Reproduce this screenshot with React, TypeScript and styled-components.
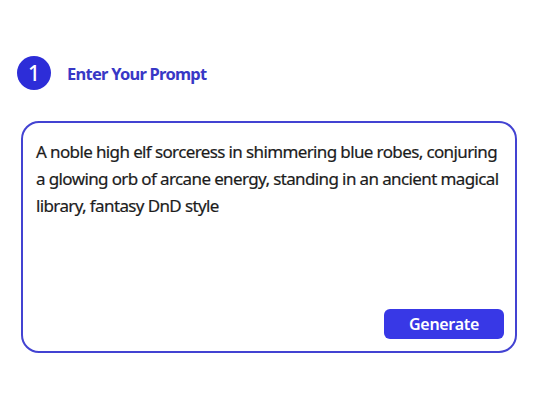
import React from "react";
import styled, { createGlobalStyle } from "styled-components";

const Global = createGlobalStyle`
  html, body { margin: 0; padding: 0; background: #ffffff; }
  body { font-family: "Noto Sans", "Open Sans", sans-serif; }
`;

const Page = styled.div`
  width: 540px;
  height: 405px;
  box-sizing: border-box;
  padding: 56px 23px 0 21px;
  display: flex;
  flex-direction: column;
`;

const Header = styled.div`
  display: flex;
  align-items: center;
  gap: 16px;
  margin-left: -4px;
  height: 34px;
`;

const StepBadge = styled.div`
  width: 34px;
  height: 34px;
  border-radius: 50%;
  background: #2d2dd8;
  color: #ffffff;
  display: flex;
  align-items: center;
  justify-content: center;
  font-size: 21px;
  font-weight: 500;
`;

const Title = styled.div`
  color: #3838c6;
  font-size: 16.5px;
  font-weight: 700;
  letter-spacing: -0.75px;
`;

const PromptBox = styled.div`
  margin-top: 31px;
  height: 232px;
  box-sizing: border-box;
  border: 2px solid #4343d2;
  border-radius: 18px;
  padding: 15px 11px 12px 13px;
  display: flex;
  flex-direction: column;
  justify-content: space-between;
`;

const PromptText = styled.p`
  margin: 0 -4px 0 0;
  color: #1c1c1c;
  font-size: 17px;
  line-height: 27px;
  letter-spacing: -0.62px;
  font-weight: 400;
  -webkit-text-stroke: 0.2px #1c1c1c;
`;

const Actions = styled.div`
  display: flex;
  justify-content: flex-end;
`;

const GenerateButton = styled.button`
  width: 120px;
  height: 30px;
  border: none;
  border-radius: 6px;
  background: #3838e6;
  color: #ffffff;
  font-family: inherit;
  font-size: 16px;
  font-weight: 600;
  letter-spacing: -0.3px;
  cursor: pointer;
`;

export default function App() {
  return (
    <>
      <Global />
      <Page>
        <Header>
          <StepBadge>1</StepBadge>
          <Title>Enter Your Prompt</Title>
        </Header>
        <PromptBox>
          <PromptText>
            A noble high elf sorceress in shimmering blue robes, conjuring a glowing orb of arcane energy, standing in an ancient magical library, fantasy DnD style
          </PromptText>
          <Actions>
            <GenerateButton>Generate</GenerateButton>
          </Actions>
        </PromptBox>
      </Page>
    </>
  );
}
